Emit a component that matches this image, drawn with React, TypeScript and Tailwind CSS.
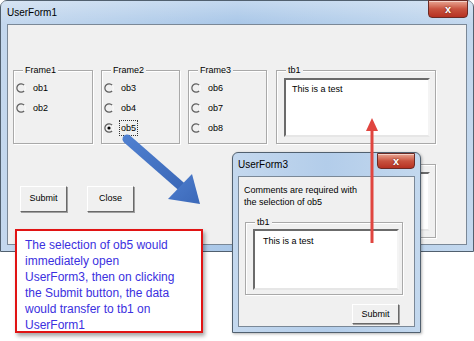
import React from 'react';

const FONT = { fontFamily: '"Liberation Sans", Arial, sans-serif' };

function Radio({ label, checked, focused }: { label: string; checked?: boolean; focused?: boolean }) {
    return (
        <div className="flex h-[20px] items-center gap-[5px]">
            <svg width="10" height="10" viewBox="0 0 10 10" className="block">
                <path d="M8.2 2.2 A4.2 4.2 0 1 0 8.2 7.8" fill="none" stroke="#5e5e5e" strokeWidth="1.2" />
                <path d="M8.2 2.2 A4.2 4.2 0 0 1 8.2 7.8" fill="none" stroke="#f8f8f8" strokeWidth="1.2" />
                {checked && <circle cx="5" cy="5" r="1.6" fill="#000" />}
            </svg>
            <span className={focused ? 'border border-dotted border-[#333] px-[1px] leading-[14px]' : 'px-[2px] leading-[14px]'}>{label}</span>
        </div>
    );
}

function Frame({ title, className, children }: { title: string; className: string; children?: React.ReactNode }) {
    return (
        <div className={`relative border border-[#a9a9a9] shadow-[inset_1px_1px_0_#fff,1px_1px_0_#fff] ${className}`}>
            {title && <span className="absolute -top-[7px] left-[9px] bg-[#f0f0f0] px-[2px] text-[9px] leading-[12px]">{title}</span>}
            {children}
        </div>
    );
}

function TextBox({ className }: { className: string }) {
    return (
        <div className={`border-2 border-t-[#6b6b6b] border-l-[#6b6b6b] border-r-[#f4f4f4] border-b-[#e6e6e6] bg-white pl-[6px] pt-[3px] text-[9px] leading-[12px] ${className}`}>
            This is a test
        </div>
    );
}

function WinButton({ label, className }: { label: string; className: string }) {
    return (
        <div className={`flex items-center justify-center border border-t-[#fff] border-l-[#fff] border-r-[#696969] border-b-[#696969] bg-[#f0f0f0] text-[9px] shadow-[1px_1px_0_#a0a0a0] ${className}`}>
            {label}
        </div>
    );
}

function CloseButton({ className }: { className: string }) {
    return (
        <div className={`absolute flex items-center justify-center rounded-b-[4px] border border-[#6b2a25] bg-gradient-to-b from-[#e8a593] via-[#c8523f] to-[#b63122] shadow-[inset_0_1px_0_rgba(255,255,255,0.5)] ${className}`}>
            <span className="text-[11px] font-bold leading-none text-white" style={{ textShadow: '0 0 2px #5a1a12' }}>x</span>
        </div>
    );
}

export default function App() {
    return (
        <div className="relative h-[341px] w-[474px] overflow-hidden bg-white text-black" style={FONT}>
            {/* UserForm1 */}
            <div className="absolute left-0 top-0 flex h-[252px] w-[474px] flex-col rounded-t-[7px] border border-[#51606f] bg-gradient-to-r from-[#c4d8ee] via-[#a9c7e8] to-[#c3d8ee]">
                <div className="flex h-[23px] items-center bg-gradient-to-b from-white/30 to-transparent pl-[6px] text-[10px]">UserForm1</div>
                <CloseButton className="right-[5px] -top-[1px] h-[18px] w-[40px]" />
                <div className="mx-[6px] flex h-[221px] flex-col border border-[#7a8897] bg-[#f0f0f0] pl-[5px] pt-[45px] text-[9px]">
                    <div className="flex items-start">
                        <Frame title="Frame1" className="h-[74px] w-[80px] pl-[2px] pt-[7px]">
                            <Radio label="ob1" />
                            <Radio label="ob2" />
                        </Frame>
                        <Frame title="Frame2" className="ml-[8px] h-[74px] w-[79px] pl-[2px] pt-[7px]">
                            <Radio label="ob3" />
                            <Radio label="ob4" />
                            <Radio label="ob5" checked focused />
                        </Frame>
                        <Frame title="Frame3" className="ml-[8px] h-[74px] w-[79px] pl-[2px] pt-[7px]">
                            <Radio label="ob6" />
                            <Radio label="ob7" />
                            <Radio label="ob8" />
                        </Frame>
                        <Frame title="tb1" className="ml-[9px] h-[74px] w-[160px] pb-[6px] pl-[7px] pr-[5px] pt-[7px]">
                            <TextBox className="h-full" />
                        </Frame>
                    </div>
                    <div className="mt-[20px] flex items-start">
                        <div className="flex w-[263px] gap-[20px] pl-[7px] pt-[22px]">
                            <WinButton label="Submit" className="h-[26px] w-[47px]" />
                            <WinButton label="Close" className="h-[26px] w-[47px]" />
                        </div>
                        <Frame title="" className="h-[74px] w-[160px] pb-[6px] pl-[7px] pr-[5px] pt-[7px]">
                            <div className="h-full border-2 border-t-[#6b6b6b] border-l-[#6b6b6b] border-r-[#f4f4f4] border-b-[#e6e6e6] bg-white" />
                        </Frame>
                    </div>
                </div>
            </div>

            {/* UserForm3 */}
            <div className="absolute left-[232px] top-[152px] flex h-[181px] w-[189px] flex-col rounded-t-[6px] border border-[#51606f] bg-gradient-to-r from-[#c4d8ee] via-[#b3cdea] to-[#c3d8ee] shadow-[1px_1px_3px_rgba(0,0,0,0.3)]">
                <div className="flex h-[23px] items-center pl-[5px] text-[10px]">UserForm3</div>
                <CloseButton className="right-[5px] top-0 h-[16px] w-[38px]" />
                <div className="mx-[5px] flex h-[151px] flex-col border border-[#7a8897] bg-[#f0f0f0] pl-[5px] pt-[7px] text-[9px] leading-[12px]">
                    <div>Comments are required with</div>
                    <div>the selection of ob5</div>
                    <Frame title="tb1" className="ml-[1px] mt-[14px] h-[73px] w-[158px] pb-[4px] pl-[7px] pr-[3px] pt-[6px]">
                        <TextBox className="h-full pl-[8px] pt-[4px]" />
                    </Frame>
                    <div className="mt-[9px] flex justify-end pr-[15px]">
                        <WinButton label="Submit" className="h-[20px] w-[47px]" />
                    </div>
                </div>
            </div>

            {/* Arrows */}
            <svg className="pointer-events-none absolute left-0 top-0" width="474" height="341" viewBox="0 0 474 341">
                <defs>
                    <linearGradient id="blue" x1="0" y1="0" x2="1" y2="1">
                        <stop offset="0" stopColor="#4f7fcf" />
                        <stop offset="1" stopColor="#3b68b8" />
                    </linearGradient>
                </defs>
                <line x1="127" y1="139" x2="183" y2="188" stroke="url(#blue)" strokeWidth="9" strokeLinecap="round" />
                <polygon points="192,174 200,204 168,199" fill="url(#blue)" />
                <line x1="372" y1="243" x2="372" y2="128" stroke="#e0453f" strokeWidth="3" />
                <polygon points="372,118 366,131 378,131" fill="#e0453f" />
            </svg>

            {/* Callout */}
            <div className="absolute left-[15px] top-[229px] h-[104px] w-[188px] border-2 border-[#e11414] bg-white pl-[8px] pt-[6px] text-[12px] leading-[16px] text-[#3b30e0] shadow-[2px_3px_4px_rgba(0,0,0,0.35)]">
                The selection of ob5 would
                <br />
                immediately open
                <br />
                UserForm3, then on clicking
                <br />
                the Submit button, the data
                <br />
                would transfer to tb1 on
                <br />
                UserForm1
            </div>
        </div>
    );
}
